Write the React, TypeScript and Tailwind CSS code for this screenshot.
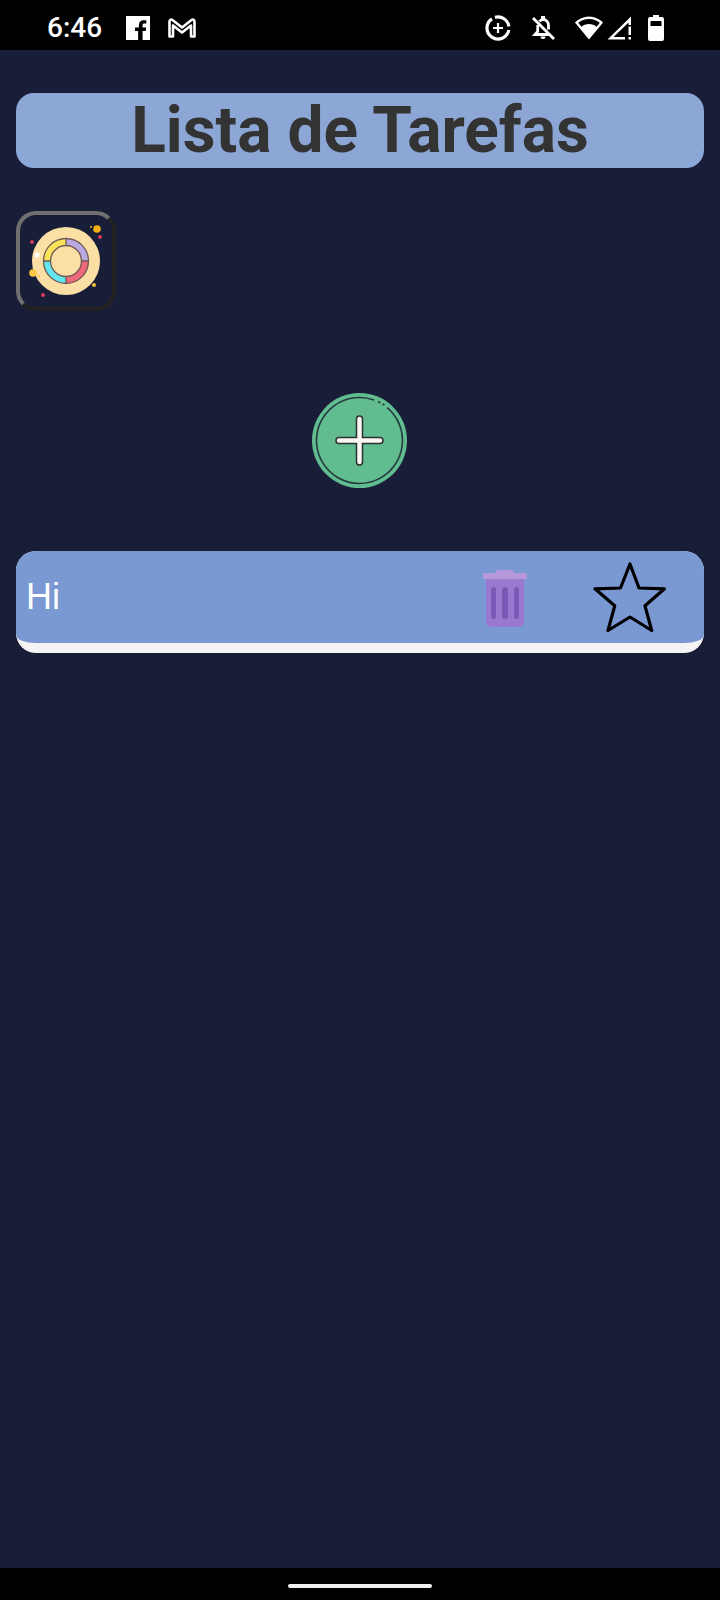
export default function App() {
  return (
    <div className="flex h-[1600px] w-[720px] flex-col overflow-hidden bg-[#181e38] font-['Roboto',sans-serif]">
      <div className="flex h-[50px] shrink-0 items-center bg-black pl-[47px] pr-[56px] pt-[5px] text-white">
        <span className="w-[79px] text-[28px] font-medium leading-none">6:46</span>
        <svg className="h-6 w-6" viewBox="0 0 24 24">
          <path fill="#fff" d="M0 0h24v24h-7.400v-9h3.100l.5-3.600h-3.600V9.200c0-1 .3-1.700 1.800-1.700h1.900V4.300c-.3 0-1.500-.1-2.800-.1-2.800 0-4.600 1.700-4.600 4.700v2.500H9v3.600h3.100v9H0z" />
        </svg>
        <svg className="ml-[18px] h-6 w-7" viewBox="0 0 28 24" fill="none" stroke="#fff" strokeWidth="2.600" strokeLinejoin="round">
          <path d="M1.500 20.500V5.500c0-1.800 1.800-2.500 3-1.500L14 11.500 23.500 4c1.200-1 3-.3 3 1.500v15h-3.500V9.500L14 16.500 5 9.500v11z" />
        </svg>
        <div className="flex-1" />
        <svg className="h-[26px] w-[26px]" viewBox="0 0 26 26" fill="none" stroke="#fff">
          <path strokeWidth="3.200" d="M10 2.400A11 11 0 0 1 23.900 11.500" />
          <path strokeWidth="3.200" d="M23.800 15A11 11 0 1 1 7 3.800" />
          <path strokeWidth="2.200" d="M13 8v10M8 13h10" />
        </svg>
        <svg className="ml-[19px] h-[26px] w-[26px]" viewBox="0 0 26 26" fill="none" stroke="#fff" strokeWidth="2.800">
          <path d="M3 3l21 21" />
          <path d="M9.500 6.500c1-1.300 2.200-2 3.500-2 3.500 0 5.500 2.800 5.500 6v4M7.700 10v6.500L5 19.500h15" />
          <path fill="#fff" stroke="none" d="M10.500 21.500h5a2.500 2.500 0 0 1-5 0zM11 1h4v3.500h-4z" />
        </svg>
        <svg className="ml-[18px] h-6 w-[30px]" viewBox="0 0 32 24" preserveAspectRatio="none">
          <path fill="#fff" fillRule="evenodd" d="M16 23.500 1 6.500C5 3 10 .5 16 .5S27 3 31 6.500zM4.500 6.800l3.400 3.900C10 9 13 8 16 8s6 1 8.100 2.700l3.400-3.900C24.500 4.500 20.500 3 16 3S7.500 4.500 4.500 6.800z" />
        </svg>
        <svg className="ml-[3px] h-6 w-[26px]" viewBox="0 0 26 24">
          <path fill="#fff" d="M.5 23.500 24 .5V9h-2.500V6.500L6.500 21H18v2.500z" />
          <path fill="#fff" d="M21.500 10.500H24V19h-2.500zM21.500 21H24v2.500h-2.500z" />
        </svg>
        <svg className="ml-[15px] h-[26px] w-[16px]" viewBox="0 0 16 26">
          <path fill="#fff" fillRule="evenodd" d="M5 0h6v2h3a2 2 0 0 1 2 2v20a2 2 0 0 1-2 2H2a2 2 0 0 1-2-2V4a2 2 0 0 1 2-2h3zM2.500 6v5h11V6z" />
        </svg>
      </div>

      <main className="flex flex-1 flex-col px-4 pt-[43px]">
        <h1 className="flex h-[75px] items-center justify-center rounded-[18px] bg-[#8ca7d6] text-[64px] font-bold leading-none text-[#333333]">
          Lista de Tarefas
        </h1>

        <div className="relative mt-[43px] h-[100px] w-[100px] rounded-[20px] border-4 border-b-[#222222] border-l-[#707070] border-r-[#222222] border-t-[#707070]">
          <svg className="absolute -left-[4px] -top-[4px] h-[100px] w-[100px]" viewBox="0 0 100 100">
            <circle cx="50" cy="50" r="34" fill="#fcdfa5" />
            <circle cx="81" cy="18" r="3.800" fill="#f0ad14" />
            <circle cx="75" cy="16" r="1" fill="#f0ad14" />
            <circle cx="84" cy="26" r="2" fill="#d83c5d" />
            <circle cx="16" cy="31" r="2" fill="#d83c5d" />
            <circle cx="21" cy="44" r="2.500" fill="#ffffff" />
            <circle cx="17" cy="62" r="3.800" fill="#fdca45" />
            <circle cx="23" cy="65" r="1.200" fill="#fdca45" />
            <circle cx="27" cy="84" r="2" fill="#d83c5d" />
            <circle cx="78" cy="74" r="2" fill="#eec13e" />
            <path fill="#fbe45c" d="M50 27.500A22.500 22.500 0 0 0 27.500 50h7A15.500 15.500 0 0 1 50 34.500z" />
            <path fill="#bca9e3" d="M50 27.500A22.500 22.500 0 0 1 72.500 50h-7A15.500 15.500 0 0 0 50 34.500z" />
            <path fill="#f0687c" d="M72.500 50A22.500 22.500 0 0 1 50 72.500v-7A15.500 15.500 0 0 0 65.500 50z" />
            <path fill="#62e7ee" d="M50 72.500A22.500 22.500 0 0 1 27.500 50h7A15.500 15.500 0 0 0 50 65.500z" />
            <g fill="none" stroke="#6e5a55" strokeWidth="1.300">
              <circle cx="50" cy="50" r="22.500" />
              <circle cx="50" cy="50" r="15.500" />
              <path d="M50 27.500v7M72.500 50h-7M50 72.500v-7M27.500 50h7" />
            </g>
          </svg>
        </div>

        <div className="mt-[82px] flex justify-center">
          <svg className="mr-[1px] h-[95px] w-[95px]" viewBox="0 0 95 95">
            <circle cx="47.500" cy="47.500" r="47.500" fill="#61bd90" />
            <g fill="none" stroke="#243a3c" strokeWidth="1.600">
              <path d="M62 7A43 43 0 1 0 75.200 14.600" />
              <path d="M66 8.800l2.500 1M70.500 11l2 1.100" />
            </g>
            <path fill="#faf8f0" stroke="#2c2f33" strokeWidth="1.500" d="M44.500 26a3 3 0 0 1 6 0V44.500H68a3 3 0 0 1 0 6H50.500V69a3 3 0 0 1-6 0V50.500H27a3 3 0 0 1 0-6H44.500z" />
          </svg>
        </div>

        <div className="mt-[63px] h-[102px] overflow-hidden rounded-[20px] bg-[#f4f4f4]">
          <div className="flex h-[92px] items-center rounded-bl-[20px_8px] rounded-br-[20px_8px] bg-[#7a98d2] pl-[10px]">
            <span className="flex-1 font-['Liberation_Sans',sans-serif] text-[36px] leading-none text-white">Hi</span>
            <svg className="mr-[65px] mt-[4px] h-[58px] w-[46px]" viewBox="0 0 46 58">
              <path fill="#9b78cf" d="M4 8h38v44a5 5 0 0 1-5 5H9a5 5 0 0 1-5-5z" />
              <path fill="#b797dc" d="M14 1.500a3 3 0 0 1 3-1.500h12a3 3 0 0 1 3 1.500V3H14zM2 3h42a1.500 1.500 0 0 1 1 1.500V9H1V4.500A1.500 1.500 0 0 1 2 3z" />
              <rect x="9" y="17" width="5" height="32" rx="2.500" fill="#7b58b5" />
              <rect x="20" y="17" width="6" height="32" rx="3" fill="#7b58b5" />
              <rect x="32" y="17" width="5" height="32" rx="2.500" fill="#7b58b5" />
            </svg>
            <svg className="mr-[37px] h-[70px] w-[74px]" viewBox="0 0 74 70" fill="none" stroke="#000" strokeWidth="3.200" strokeLinejoin="round">
              <path d="M37 2l9 24 25.500.8-19.500 17 6.700 24.700L37 55 15 68.500l6.700-24.700L2 26.800 27.500 26z" />
            </svg>
          </div>
        </div>
      </main>

      <div className="flex h-8 shrink-0 justify-center bg-black pt-4">
        <div className="h-1 w-[144px] rounded-sm bg-[#f0f0f0]" />
      </div>
    </div>
  );
}
